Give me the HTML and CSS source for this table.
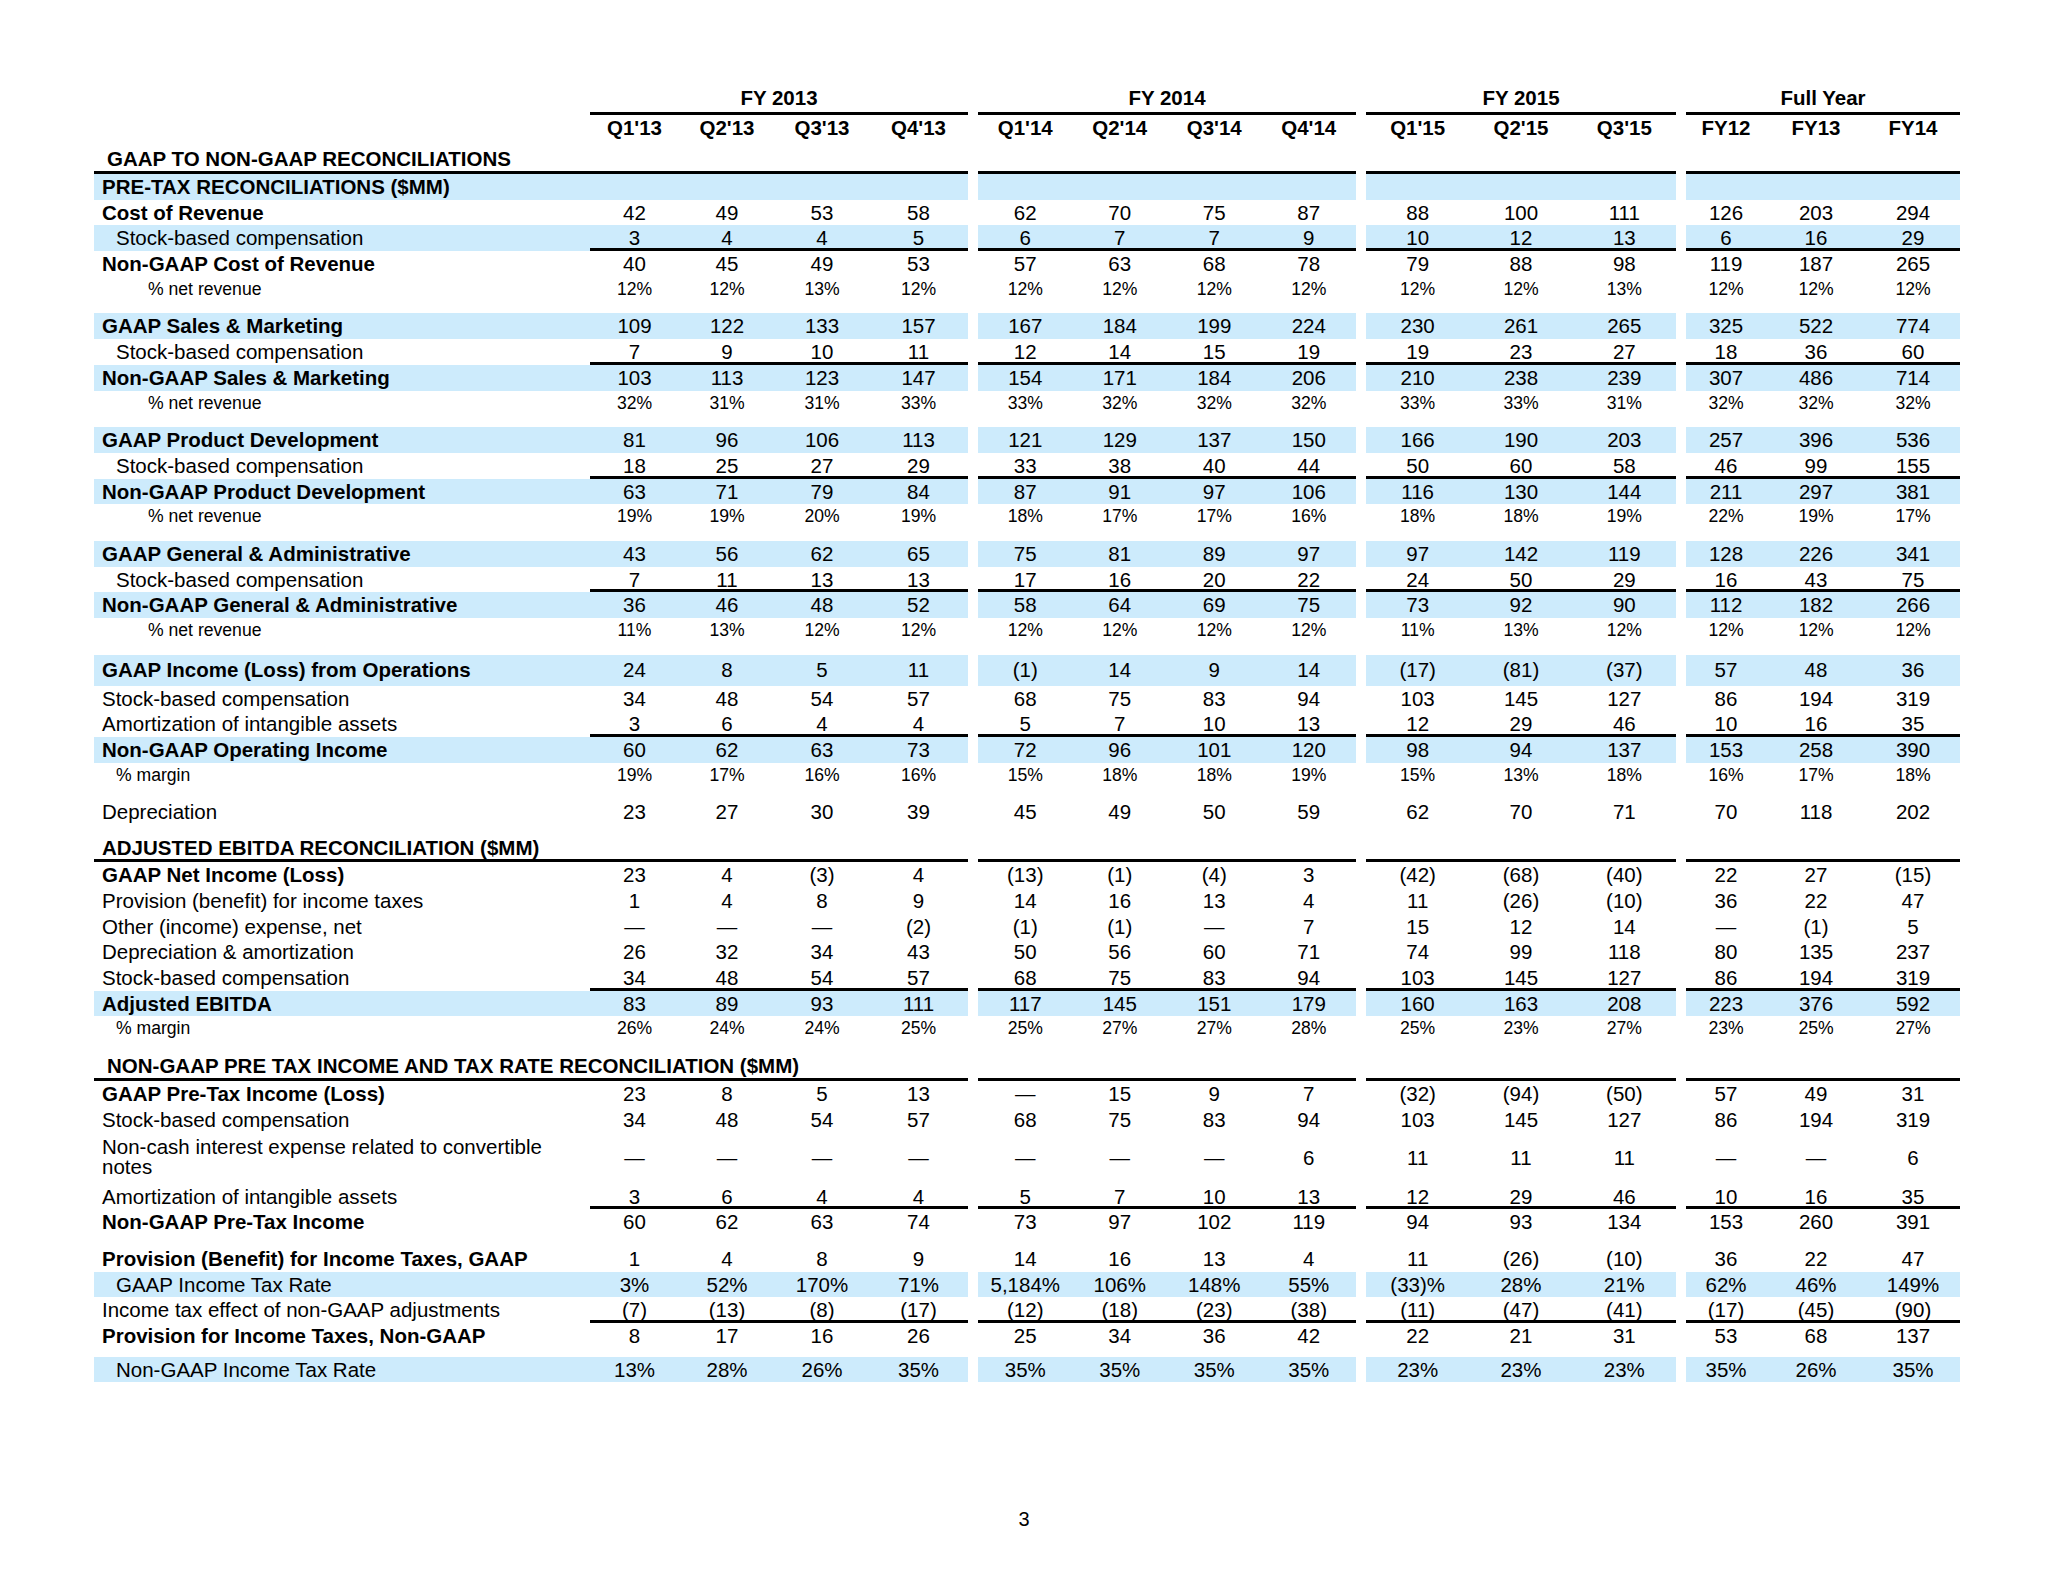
FILE: index.html
```html
<!DOCTYPE html>
<html lang="en">
<head>
<meta charset="utf-8">
<title>GAAP to Non-GAAP Reconciliations</title>
<link rel="stylesheet" href="styles.css">
</head>
<body>
<div class="sheet">
  <div class="tbl">
    <div class="row fyrow hdr">
      <div class="lbl"></div>
      <div class="g q q1">FY 2013</div>
      <div class="g q q2">FY 2014</div>
      <div class="g y3">FY 2015</div>
      <div class="g fy">Full Year</div>
    </div>
    <div class="row qrow hdr">
      <div class="lbl"></div>
      <div class="g q q1"><span>Q1'13</span><span>Q2'13</span><span>Q3'13</span><span>Q4'13</span></div>
      <div class="g q q2"><span>Q1'14</span><span>Q2'14</span><span>Q3'14</span><span>Q4'14</span></div>
      <div class="g y3"><span>Q1'15</span><span>Q2'15</span><span>Q3'15</span></div>
      <div class="g fy"><span>FY12</span><span>FY13</span><span>FY14</span></div>
    </div>
    <div class="row sec top b">
      <div class="lbl">GAAP TO NON-GAAP RECONCILIATIONS</div>
      <div class="g q q1"></div>
      <div class="g q q2"></div>
      <div class="g y3"></div>
      <div class="g fy"></div>
    </div>
    <div class="row blue b">
      <div class="lbl">PRE-TAX RECONCILIATIONS ($MM)</div>
      <div class="g q q1"></div>
      <div class="g q q2"></div>
      <div class="g y3"></div>
      <div class="g fy"></div>
    </div>

    <div class="row b">
      <div class="lbl">Cost of Revenue</div>
      <div class="g q q1"><span>42</span><span>49</span><span>53</span><span>58</span></div>
      <div class="g q q2"><span>62</span><span>70</span><span>75</span><span>87</span></div>
      <div class="g y3"><span>88</span><span>100</span><span>111</span></div>
      <div class="g fy"><span>126</span><span>203</span><span>294</span></div>
    </div>
    <div class="row blue ul i1">
      <div class="lbl">Stock-based compensation</div>
      <div class="g q q1"><span>3</span><span>4</span><span>4</span><span>5</span></div>
      <div class="g q q2"><span>6</span><span>7</span><span>7</span><span>9</span></div>
      <div class="g y3"><span>10</span><span>12</span><span>13</span></div>
      <div class="g fy"><span>6</span><span>16</span><span>29</span></div>
    </div>
    <div class="row b">
      <div class="lbl">Non-GAAP Cost of Revenue</div>
      <div class="g q q1"><span>40</span><span>45</span><span>49</span><span>53</span></div>
      <div class="g q q2"><span>57</span><span>63</span><span>68</span><span>78</span></div>
      <div class="g y3"><span>79</span><span>88</span><span>98</span></div>
      <div class="g fy"><span>119</span><span>187</span><span>265</span></div>
    </div>
    <div class="row pct i2">
      <div class="lbl">% net revenue</div>
      <div class="g q q1"><span>12%</span><span>12%</span><span>13%</span><span>12%</span></div>
      <div class="g q q2"><span>12%</span><span>12%</span><span>12%</span><span>12%</span></div>
      <div class="g y3"><span>12%</span><span>12%</span><span>13%</span></div>
      <div class="g fy"><span>12%</span><span>12%</span><span>12%</span></div>
    </div>

    <div class="row blue b gap">
      <div class="lbl">GAAP Sales &amp; Marketing</div>
      <div class="g q q1"><span>109</span><span>122</span><span>133</span><span>157</span></div>
      <div class="g q q2"><span>167</span><span>184</span><span>199</span><span>224</span></div>
      <div class="g y3"><span>230</span><span>261</span><span>265</span></div>
      <div class="g fy"><span>325</span><span>522</span><span>774</span></div>
    </div>
    <div class="row ul i1">
      <div class="lbl">Stock-based compensation</div>
      <div class="g q q1"><span>7</span><span>9</span><span>10</span><span>11</span></div>
      <div class="g q q2"><span>12</span><span>14</span><span>15</span><span>19</span></div>
      <div class="g y3"><span>19</span><span>23</span><span>27</span></div>
      <div class="g fy"><span>18</span><span>36</span><span>60</span></div>
    </div>
    <div class="row blue b">
      <div class="lbl">Non-GAAP Sales &amp; Marketing</div>
      <div class="g q q1"><span>103</span><span>113</span><span>123</span><span>147</span></div>
      <div class="g q q2"><span>154</span><span>171</span><span>184</span><span>206</span></div>
      <div class="g y3"><span>210</span><span>238</span><span>239</span></div>
      <div class="g fy"><span>307</span><span>486</span><span>714</span></div>
    </div>
    <div class="row pct i2">
      <div class="lbl">% net revenue</div>
      <div class="g q q1"><span>32%</span><span>31%</span><span>31%</span><span>33%</span></div>
      <div class="g q q2"><span>33%</span><span>32%</span><span>32%</span><span>32%</span></div>
      <div class="g y3"><span>33%</span><span>33%</span><span>31%</span></div>
      <div class="g fy"><span>32%</span><span>32%</span><span>32%</span></div>
    </div>

    <div class="row blue b gap">
      <div class="lbl">GAAP Product Development</div>
      <div class="g q q1"><span>81</span><span>96</span><span>106</span><span>113</span></div>
      <div class="g q q2"><span>121</span><span>129</span><span>137</span><span>150</span></div>
      <div class="g y3"><span>166</span><span>190</span><span>203</span></div>
      <div class="g fy"><span>257</span><span>396</span><span>536</span></div>
    </div>
    <div class="row ul i1">
      <div class="lbl">Stock-based compensation</div>
      <div class="g q q1"><span>18</span><span>25</span><span>27</span><span>29</span></div>
      <div class="g q q2"><span>33</span><span>38</span><span>40</span><span>44</span></div>
      <div class="g y3"><span>50</span><span>60</span><span>58</span></div>
      <div class="g fy"><span>46</span><span>99</span><span>155</span></div>
    </div>
    <div class="row blue b">
      <div class="lbl">Non-GAAP Product Development</div>
      <div class="g q q1"><span>63</span><span>71</span><span>79</span><span>84</span></div>
      <div class="g q q2"><span>87</span><span>91</span><span>97</span><span>106</span></div>
      <div class="g y3"><span>116</span><span>130</span><span>144</span></div>
      <div class="g fy"><span>211</span><span>297</span><span>381</span></div>
    </div>
    <div class="row pct i2">
      <div class="lbl">% net revenue</div>
      <div class="g q q1"><span>19%</span><span>19%</span><span>20%</span><span>19%</span></div>
      <div class="g q q2"><span>18%</span><span>17%</span><span>17%</span><span>16%</span></div>
      <div class="g y3"><span>18%</span><span>18%</span><span>19%</span></div>
      <div class="g fy"><span>22%</span><span>19%</span><span>17%</span></div>
    </div>

    <div class="row blue b gap">
      <div class="lbl">GAAP General &amp; Administrative</div>
      <div class="g q q1"><span>43</span><span>56</span><span>62</span><span>65</span></div>
      <div class="g q q2"><span>75</span><span>81</span><span>89</span><span>97</span></div>
      <div class="g y3"><span>97</span><span>142</span><span>119</span></div>
      <div class="g fy"><span>128</span><span>226</span><span>341</span></div>
    </div>
    <div class="row ul i1">
      <div class="lbl">Stock-based compensation</div>
      <div class="g q q1"><span>7</span><span>11</span><span>13</span><span>13</span></div>
      <div class="g q q2"><span>17</span><span>16</span><span>20</span><span>22</span></div>
      <div class="g y3"><span>24</span><span>50</span><span>29</span></div>
      <div class="g fy"><span>16</span><span>43</span><span>75</span></div>
    </div>
    <div class="row blue b">
      <div class="lbl">Non-GAAP General &amp; Administrative</div>
      <div class="g q q1"><span>36</span><span>46</span><span>48</span><span>52</span></div>
      <div class="g q q2"><span>58</span><span>64</span><span>69</span><span>75</span></div>
      <div class="g y3"><span>73</span><span>92</span><span>90</span></div>
      <div class="g fy"><span>112</span><span>182</span><span>266</span></div>
    </div>
    <div class="row pct i2">
      <div class="lbl">% net revenue</div>
      <div class="g q q1"><span>11%</span><span>13%</span><span>12%</span><span>12%</span></div>
      <div class="g q q2"><span>12%</span><span>12%</span><span>12%</span><span>12%</span></div>
      <div class="g y3"><span>11%</span><span>13%</span><span>12%</span></div>
      <div class="g fy"><span>12%</span><span>12%</span><span>12%</span></div>
    </div>

    <div class="row blue b gap ops">
      <div class="lbl">GAAP Income (Loss) from Operations</div>
      <div class="g q q1"><span>24</span><span>8</span><span>5</span><span>11</span></div>
      <div class="g q q2"><span>(1)</span><span>14</span><span>9</span><span>14</span></div>
      <div class="g y3"><span>(17)</span><span>(81)</span><span>(37)</span></div>
      <div class="g fy"><span>57</span><span>48</span><span>36</span></div>
    </div>
    <div class="row">
      <div class="lbl">Stock-based compensation</div>
      <div class="g q q1"><span>34</span><span>48</span><span>54</span><span>57</span></div>
      <div class="g q q2"><span>68</span><span>75</span><span>83</span><span>94</span></div>
      <div class="g y3"><span>103</span><span>145</span><span>127</span></div>
      <div class="g fy"><span>86</span><span>194</span><span>319</span></div>
    </div>
    <div class="row ul">
      <div class="lbl">Amortization of intangible assets</div>
      <div class="g q q1"><span>3</span><span>6</span><span>4</span><span>4</span></div>
      <div class="g q q2"><span>5</span><span>7</span><span>10</span><span>13</span></div>
      <div class="g y3"><span>12</span><span>29</span><span>46</span></div>
      <div class="g fy"><span>10</span><span>16</span><span>35</span></div>
    </div>
    <div class="row blue b">
      <div class="lbl">Non-GAAP Operating Income</div>
      <div class="g q q1"><span>60</span><span>62</span><span>63</span><span>73</span></div>
      <div class="g q q2"><span>72</span><span>96</span><span>101</span><span>120</span></div>
      <div class="g y3"><span>98</span><span>94</span><span>137</span></div>
      <div class="g fy"><span>153</span><span>258</span><span>390</span></div>
    </div>
    <div class="row pct i1">
      <div class="lbl">% margin</div>
      <div class="g q q1"><span>19%</span><span>17%</span><span>16%</span><span>16%</span></div>
      <div class="g q q2"><span>15%</span><span>18%</span><span>18%</span><span>19%</span></div>
      <div class="g y3"><span>15%</span><span>13%</span><span>18%</span></div>
      <div class="g fy"><span>16%</span><span>17%</span><span>18%</span></div>
    </div>

    <div class="row gap">
      <div class="lbl">Depreciation</div>
      <div class="g q q1"><span>23</span><span>27</span><span>30</span><span>39</span></div>
      <div class="g q q2"><span>45</span><span>49</span><span>50</span><span>59</span></div>
      <div class="g y3"><span>62</span><span>70</span><span>71</span></div>
      <div class="g fy"><span>70</span><span>118</span><span>202</span></div>
    </div>

    <div class="row sec mid b gap">
      <div class="lbl">ADJUSTED EBITDA RECONCILIATION ($MM)</div>
      <div class="g q q1"></div>
      <div class="g q q2"></div>
      <div class="g y3"></div>
      <div class="g fy"></div>
    </div>
    <div class="row b">
      <div class="lbl">GAAP Net Income (Loss)</div>
      <div class="g q q1"><span>23</span><span>4</span><span>(3)</span><span>4</span></div>
      <div class="g q q2"><span>(13)</span><span>(1)</span><span>(4)</span><span>3</span></div>
      <div class="g y3"><span>(42)</span><span>(68)</span><span>(40)</span></div>
      <div class="g fy"><span>22</span><span>27</span><span>(15)</span></div>
    </div>
    <div class="row">
      <div class="lbl">Provision (benefit) for income taxes</div>
      <div class="g q q1"><span>1</span><span>4</span><span>8</span><span>9</span></div>
      <div class="g q q2"><span>14</span><span>16</span><span>13</span><span>4</span></div>
      <div class="g y3"><span>11</span><span>(26)</span><span>(10)</span></div>
      <div class="g fy"><span>36</span><span>22</span><span>47</span></div>
    </div>
    <div class="row">
      <div class="lbl">Other (income) expense, net</div>
      <div class="g q q1"><span>—</span><span>—</span><span>—</span><span>(2)</span></div>
      <div class="g q q2"><span>(1)</span><span>(1)</span><span>—</span><span>7</span></div>
      <div class="g y3"><span>15</span><span>12</span><span>14</span></div>
      <div class="g fy"><span>—</span><span>(1)</span><span>5</span></div>
    </div>
    <div class="row">
      <div class="lbl">Depreciation &amp; amortization</div>
      <div class="g q q1"><span>26</span><span>32</span><span>34</span><span>43</span></div>
      <div class="g q q2"><span>50</span><span>56</span><span>60</span><span>71</span></div>
      <div class="g y3"><span>74</span><span>99</span><span>118</span></div>
      <div class="g fy"><span>80</span><span>135</span><span>237</span></div>
    </div>
    <div class="row ul">
      <div class="lbl">Stock-based compensation</div>
      <div class="g q q1"><span>34</span><span>48</span><span>54</span><span>57</span></div>
      <div class="g q q2"><span>68</span><span>75</span><span>83</span><span>94</span></div>
      <div class="g y3"><span>103</span><span>145</span><span>127</span></div>
      <div class="g fy"><span>86</span><span>194</span><span>319</span></div>
    </div>
    <div class="row blue b">
      <div class="lbl">Adjusted EBITDA</div>
      <div class="g q q1"><span>83</span><span>89</span><span>93</span><span>111</span></div>
      <div class="g q q2"><span>117</span><span>145</span><span>151</span><span>179</span></div>
      <div class="g y3"><span>160</span><span>163</span><span>208</span></div>
      <div class="g fy"><span>223</span><span>376</span><span>592</span></div>
    </div>
    <div class="row pct i1">
      <div class="lbl">% margin</div>
      <div class="g q q1"><span>26%</span><span>24%</span><span>24%</span><span>25%</span></div>
      <div class="g q q2"><span>25%</span><span>27%</span><span>27%</span><span>28%</span></div>
      <div class="g y3"><span>25%</span><span>23%</span><span>27%</span></div>
      <div class="g fy"><span>23%</span><span>25%</span><span>27%</span></div>
    </div>

    <div class="row sec low b gap">
      <div class="lbl">NON-GAAP PRE TAX INCOME AND TAX RATE RECONCILIATION ($MM)</div>
      <div class="g q q1"></div>
      <div class="g q q2"></div>
      <div class="g y3"></div>
      <div class="g fy"></div>
    </div>
    <div class="row b">
      <div class="lbl">GAAP Pre-Tax Income (Loss)</div>
      <div class="g q q1"><span>23</span><span>8</span><span>5</span><span>13</span></div>
      <div class="g q q2"><span>—</span><span>15</span><span>9</span><span>7</span></div>
      <div class="g y3"><span>(32)</span><span>(94)</span><span>(50)</span></div>
      <div class="g fy"><span>57</span><span>49</span><span>31</span></div>
    </div>
    <div class="row">
      <div class="lbl">Stock-based compensation</div>
      <div class="g q q1"><span>34</span><span>48</span><span>54</span><span>57</span></div>
      <div class="g q q2"><span>68</span><span>75</span><span>83</span><span>94</span></div>
      <div class="g y3"><span>103</span><span>145</span><span>127</span></div>
      <div class="g fy"><span>86</span><span>194</span><span>319</span></div>
    </div>
    <div class="row tall">
      <div class="lbl">Non-cash interest expense related to convertible notes</div>
      <div class="g q q1"><span>—</span><span>—</span><span>—</span><span>—</span></div>
      <div class="g q q2"><span>—</span><span>—</span><span>—</span><span>6</span></div>
      <div class="g y3"><span>11</span><span>11</span><span>11</span></div>
      <div class="g fy"><span>—</span><span>—</span><span>6</span></div>
    </div>
    <div class="row ul">
      <div class="lbl">Amortization of intangible assets</div>
      <div class="g q q1"><span>3</span><span>6</span><span>4</span><span>4</span></div>
      <div class="g q q2"><span>5</span><span>7</span><span>10</span><span>13</span></div>
      <div class="g y3"><span>12</span><span>29</span><span>46</span></div>
      <div class="g fy"><span>10</span><span>16</span><span>35</span></div>
    </div>
    <div class="row b">
      <div class="lbl">Non-GAAP Pre-Tax Income</div>
      <div class="g q q1"><span>60</span><span>62</span><span>63</span><span>74</span></div>
      <div class="g q q2"><span>73</span><span>97</span><span>102</span><span>119</span></div>
      <div class="g y3"><span>94</span><span>93</span><span>134</span></div>
      <div class="g fy"><span>153</span><span>260</span><span>391</span></div>
    </div>

    <div class="row b gap">
      <div class="lbl">Provision (Benefit) for Income Taxes, GAAP</div>
      <div class="g q q1"><span>1</span><span>4</span><span>8</span><span>9</span></div>
      <div class="g q q2"><span>14</span><span>16</span><span>13</span><span>4</span></div>
      <div class="g y3"><span>11</span><span>(26)</span><span>(10)</span></div>
      <div class="g fy"><span>36</span><span>22</span><span>47</span></div>
    </div>
    <div class="row blue i1">
      <div class="lbl">GAAP Income Tax Rate</div>
      <div class="g q q1"><span>3%</span><span>52%</span><span>170%</span><span>71%</span></div>
      <div class="g q q2"><span>5,184%</span><span>106%</span><span>148%</span><span>55%</span></div>
      <div class="g y3"><span>(33)%</span><span>28%</span><span>21%</span></div>
      <div class="g fy"><span>62%</span><span>46%</span><span>149%</span></div>
    </div>
    <div class="row ul">
      <div class="lbl">Income tax effect of non-GAAP adjustments</div>
      <div class="g q q1"><span>(7)</span><span>(13)</span><span>(8)</span><span>(17)</span></div>
      <div class="g q q2"><span>(12)</span><span>(18)</span><span>(23)</span><span>(38)</span></div>
      <div class="g y3"><span>(11)</span><span>(47)</span><span>(41)</span></div>
      <div class="g fy"><span>(17)</span><span>(45)</span><span>(90)</span></div>
    </div>
    <div class="row b">
      <div class="lbl">Provision for Income Taxes, Non-GAAP</div>
      <div class="g q q1"><span>8</span><span>17</span><span>16</span><span>26</span></div>
      <div class="g q q2"><span>25</span><span>34</span><span>36</span><span>42</span></div>
      <div class="g y3"><span>22</span><span>21</span><span>31</span></div>
      <div class="g fy"><span>53</span><span>68</span><span>137</span></div>
    </div>
    <div class="row blue i1 last">
      <div class="lbl">Non-GAAP Income Tax Rate</div>
      <div class="g q q1"><span>13%</span><span>28%</span><span>26%</span><span>35%</span></div>
      <div class="g q q2"><span>35%</span><span>35%</span><span>35%</span><span>35%</span></div>
      <div class="g y3"><span>23%</span><span>23%</span><span>23%</span></div>
      <div class="g fy"><span>35%</span><span>26%</span><span>35%</span></div>
    </div>
  </div>
</div>
<div class="pageno">3</div>
</body>
</html>
```

FILE: styles.css
```css
* {
  box-sizing: border-box;
  margin: 0;
  padding: 0;
}

html, body {
  background: #ffffff;
}

body {
  width: 2048px;
  height: 1582px;
  font-family: "Liberation Sans", Arial, Helvetica, sans-serif;
  color: #000000;
  overflow: hidden;
}

.sheet {
  padding: 84px 0 0 94px;
}

.tbl {
  display: flex;
  flex-direction: column;
}

.row {
  display: flex;
  height: 25.7px;
  line-height: 25.7px;
  font-size: 20.5px;
}

.lbl {
  width: 496px;
  padding-left: 8px;
  white-space: nowrap;
}

.g {
  display: grid;
  text-align: center;
}

.q {
  width: 378px;
  grid-template-columns: repeat(4, 1fr);
}

.q1 {
  grid-template-columns: 89px 96px 94px 99px;
}

.q2,
.y3,
.fy {
  margin-left: 10px;
}

.y3 {
  width: 310px;
  grid-template-columns: repeat(3, 1fr);
}

.fy {
  width: 274px;
  grid-template-columns: 80px 100px 94px;
}

.g span {
  white-space: nowrap;
}

.b .lbl,
.hdr .g {
  font-weight: bold;
}

.blue .lbl,
.blue .g {
  background: #cdebfc;
}

.ul .g {
  border-bottom: 3px solid #000000;
}

.i1 .lbl {
  padding-left: 22px;
}

.i2 .lbl {
  padding-left: 54px;
}

.pct {
  font-size: 17.6px;
}

.gap {
  margin-top: 11px;
}

/* header rows */
.fyrow {
  height: 31px;
  line-height: 28px;
}

.fyrow .g {
  display: block;
  border-bottom: 3px solid #000000;
}

.qrow {
  height: 26px;
  line-height: 26px;
}

.sec .lbl,
.sec .g {
  border-bottom: 3px solid #000000;
}

.sec.top {
  height: 33px;
  line-height: 30px;
}

.sec.top .lbl,
.sec.top .g {
  padding-top: 3px;
}

.sec.top .lbl {
  padding-left: 13px;
}

.sec.mid {
  height: 26px;
  line-height: 23px;
}

.sec.low {
  height: 28px;
  line-height: 25px;
}

.sec.low .lbl {
  padding-left: 13px;
}

.ops {
  height: 31px;
  line-height: 30px;
}

.tall {
  height: 51.4px;
}

.tall .lbl {
  display: flex;
  align-items: center;
  white-space: normal;
  line-height: 20px;
  padding-right: 24px;
  padding-bottom: 2px;
}

.tall .g {
  align-items: center;
  line-height: 22px;
}

.last {
  margin-top: 7.7px;
  height: 25.4px;
  line-height: 25.4px;
}

.pageno {
  width: 2048px;
  margin-top: 125px;
  text-align: center;
  font-size: 20px;
  line-height: 24px;
}
```
